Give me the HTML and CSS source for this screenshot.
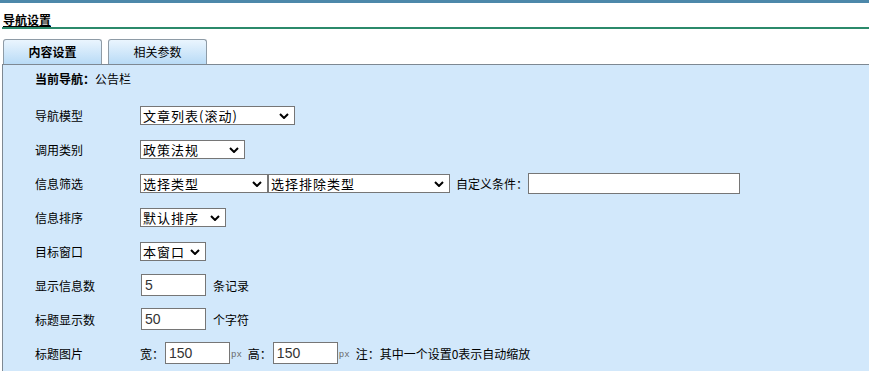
FILE: index.html
```html
<!DOCTYPE html>
<html lang="zh-CN">
<head>
    <meta charset="UTF-8">
    <title>导航设置</title>
    <link rel="stylesheet" href="styles.css">
</head>
<body>
    <div class="topbar"></div>
    <div class="header">
        <span class="title">导航设置</span>
    </div>

    <div class="tabs">
        <div class="tab active">内容设置</div>
        <div class="tab">相关参数</div>
    </div>

    <div class="panel">
        <div class="row first">
            <span class="current"><b>当前导航：</b>公告栏</span>
        </div>

        <div class="row">
            <span class="label">导航模型</span>
            <span class="sel w155">
                <select><option>文章列表(滚动)</option></select>
                <svg class="arrow" viewBox="0 0 10 6"><path d="M1 1 L5 5 L9 1" /></svg>
            </span>
        </div>

        <div class="row">
            <span class="label">调用类别</span>
            <span class="sel w105">
                <select><option>政策法规</option></select>
                <svg class="arrow" viewBox="0 0 10 6"><path d="M1 1 L5 5 L9 1" /></svg>
            </span>
        </div>

        <div class="row">
            <span class="label">信息筛选</span>
            <span class="sel w127">
                <select><option>选择类型</option></select>
                <svg class="arrow" viewBox="0 0 10 6"><path d="M1 1 L5 5 L9 1" /></svg>
            </span>
            <span class="sel w182">
                <select><option>选择排除类型</option></select>
                <svg class="arrow" viewBox="0 0 10 6"><path d="M1 1 L5 5 L9 1" /></svg>
            </span>
            <span class="text custom">自定义条件：</span>
            <input class="input wide" type="text">
        </div>

        <div class="row">
            <span class="label">信息排序</span>
            <span class="sel w86">
                <select><option>默认排序</option></select>
                <svg class="arrow" viewBox="0 0 10 6"><path d="M1 1 L5 5 L9 1" /></svg>
            </span>
        </div>

        <div class="row">
            <span class="label">目标窗口</span>
            <span class="sel w66">
                <select><option>本窗口</option></select>
                <svg class="arrow" viewBox="0 0 10 6"><path d="M1 1 L5 5 L9 1" /></svg>
            </span>
        </div>

        <div class="row">
            <span class="label">显示信息数</span>
            <input class="input num" type="text" value="5">
            <span class="text unit">条记录</span>
        </div>

        <div class="row">
            <span class="label">标题显示数</span>
            <input class="input num" type="text" value="50">
            <span class="text unit">个字符</span>
        </div>

        <div class="row">
            <span class="label">标题图片</span>
            <span class="text">宽：</span>
            <input class="input size" type="text" value="150">
            <span class="px">px</span>
            <span class="text">高：</span>
            <input class="input size" type="text" value="150">
            <span class="px">px</span>
            <span class="text">注：其中一个设置0表示自动缩放</span>
        </div>
    </div>
</body>
</html>
```

FILE: styles.css
```css
body {
  margin: 0;
  padding: 0;
  background-color: #fff;
  font-family: "Noto Sans CJK SC", "DejaVu Sans", sans-serif;
  font-size: 12px;
  color: #000;
  overflow: hidden;
}

.topbar {
  height: 3px;
  background-color: #4d88aa;
}

.header {
  margin-left: 2px;
  height: 26px;
  border-bottom: 2px solid #2b8a6b;
  box-sizing: border-box;
  padding: 8px 0 0 1px;
}

.title {
  font-weight: bold;
  font-size: 12px;
  line-height: 16px;
  text-decoration: underline;
  text-underline-offset: 1px;
}

.tabs {
  display: flex;
  gap: 6px;
  margin: 10px 0 0 3px;
  height: 25px;
}

.tab {
  width: 97px;
  height: 24px;
  line-height: 24px;
  text-align: center;
  border: 1px solid #8e9ba6;
  border-bottom: none;
  border-radius: 3px 3px 0 0;
  background: linear-gradient(to bottom, #eaf5fe, #b9dbf6);
}

.tab.active {
  font-weight: bold;
}

.panel {
  margin-left: 2px;
  border-top: 1px solid #7e8892;
  border-left: 1px solid #7e8892;
  background-color: #d2e8fb;
  padding-left: 32px;
  height: 320px;
}

.row {
  display: flex;
  align-items: center;
  height: 34px;
}

.row.first {
  height: 27px;
  margin-bottom: 6px;
}

.label {
  width: 105px;
  flex-shrink: 0;
}

.sel {
  position: relative;
  display: inline-block;
  height: 19px;
}

.sel select {
  appearance: none;
  -webkit-appearance: none;
  width: 100%;
  height: 19px;
  margin: 0;
  padding: 0 0 0 2px;
  border: 1px solid #767676;
  border-radius: 0;
  background-color: #fff;
  font-family: "Noto Sans CJK SC", sans-serif;
  font-size: 13px;
  letter-spacing: 1px;
  color: #000;
  box-sizing: border-box;
  line-height: 17px;
}

.sel .arrow {
  position: absolute;
  right: 6px;
  top: 7px;
  width: 10px;
  height: 6px;
  fill: none;
  stroke: #000;
  stroke-width: 2;
  pointer-events: none;
}

.w155 { width: 155px; }
.w105 { width: 105px; }
.w127 { width: 128px; }
.w182 { width: 182px; }
.w86 { width: 86px; }
.w66 { width: 66px; }

.text {
  white-space: nowrap;
}

.custom {
  margin-left: 6px;
  margin-right: 0;
}

.unit {
  margin-left: 7px;
}

.input {
  height: 22px;
  margin: 0;
  padding: 0 3px;
  border: 1px solid #767676;
  border-radius: 0;
  background-color: #fff;
  font-family: "Liberation Sans", Arial, sans-serif;
  font-size: 14px;
  color: #333;
  box-sizing: border-box;
}

.input.wide {
  width: 212px;
  height: 21px;
}

.input.num {
  width: 65px;
  margin-left: 1px;
}

.input.size {
  width: 65px;
  margin-left: 1px;
}

.px {
  font-family: "Liberation Mono", monospace;
  font-size: 9px;
  color: #6a6a6a;
  margin: 3px 6px 0 1px;
}
```
